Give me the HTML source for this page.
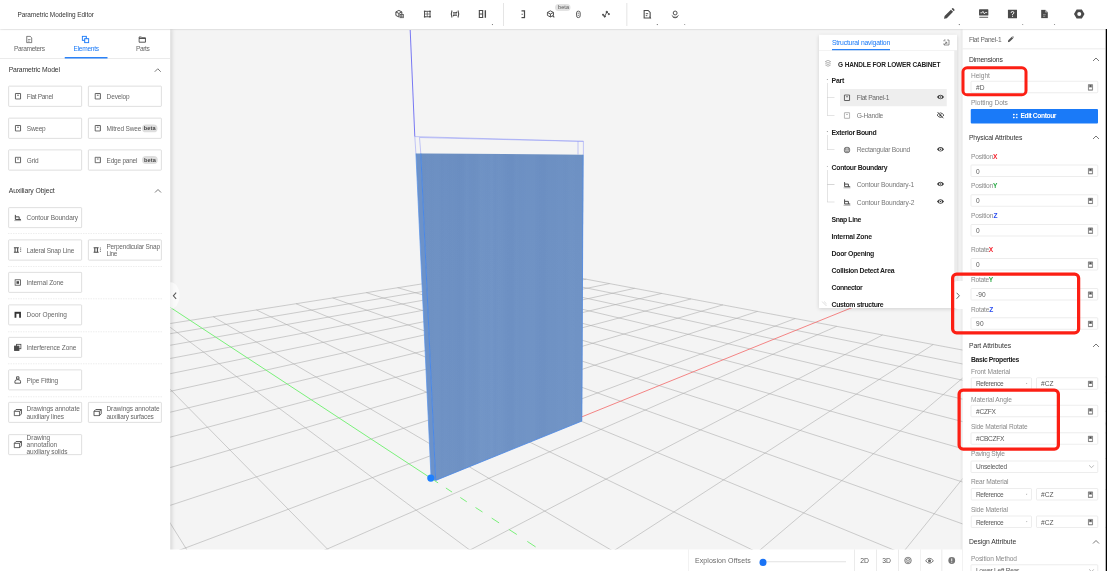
<!DOCTYPE html><html><head><meta charset="utf-8"><style>
*{box-sizing:border-box;margin:0;padding:0}
html,body{width:1107px;height:571px;overflow:hidden;background:#fff}
body{font-family:"Liberation Sans",sans-serif;font-size:6.6px;color:#444;position:relative;letter-spacing:-0.12px}
.abs{position:absolute}
.t{position:absolute;white-space:nowrap;line-height:8px;height:8px}
.b{font-weight:bold;color:#222}
#s4{position:absolute;left:0;top:0;width:4428px;height:2284px;transform:scale(0.25);transform-origin:0 0;filter:saturate(1.0001)}
#z4{position:absolute;left:0;top:0;width:1107px;height:571px;zoom:4}
#canvas{position:absolute;left:0;top:0;width:1107px;height:571px;background:#f4f4f4;overflow:hidden}
#top{z-index:5;position:absolute;left:0;top:0;width:1107px;height:28.9px;background:#fff;box-shadow:0 0.6px 1.6px rgba(0,0,0,0.16)}
#left{position:absolute;left:0;top:29.2px;width:170.2px;height:546px;background:#fff;box-shadow:1.5px 0 4px rgba(0,0,0,0.13)}
#bottom{position:absolute;left:170px;top:549.5px;width:792px;height:22px;background:#fff}
#right{position:absolute;left:962.5px;top:29.2px;width:143px;height:546px;background:#fff;box-shadow:-1px 0 3px rgba(0,0,0,0.13)}
#nav{position:absolute;left:819px;top:34.7px;width:138px;height:273.3px;background:#fff;box-shadow:0 1px 4px rgba(0,0,0,0.15);overflow:hidden}
#edge{position:absolute;left:1105.7px;top:0;width:2px;height:571px;background:#000}
.btn{position:absolute;height:21px;width:73.7px;border:0.75px solid #d4d4d4;border-radius:1px;background:#fff}
.sep{position:absolute;left:8px;width:154px;height:0;border-top:0.7px dashed #dcdcdc}
.inp{position:absolute;height:12px;border:0.7px solid #dadada;border-radius:1px;background:#fff}
.lab{color:#777}
.red{position:absolute;border:3.4px solid #fc1f14;border-radius:5.6px}
</style></head><body>
<div id="s4"><div id="z4">
<div id="canvas"><svg id="scene" width="1107" height="571" viewBox="0 0 1107 571" style="position:absolute;left:0;top:0">
<defs>
<linearGradient id="wood" x1="0" y1="0" x2="1" y2="0"><stop offset="0.000" stop-color="rgb(110,145,195)"/><stop offset="0.022" stop-color="rgb(109,144,194)"/><stop offset="0.043" stop-color="rgb(110,145,196)"/><stop offset="0.065" stop-color="rgb(109,144,194)"/><stop offset="0.087" stop-color="rgb(110,145,195)"/><stop offset="0.109" stop-color="rgb(110,145,195)"/><stop offset="0.130" stop-color="rgb(108,143,194)"/><stop offset="0.152" stop-color="rgb(109,144,195)"/><stop offset="0.174" stop-color="rgb(108,143,194)"/><stop offset="0.196" stop-color="rgb(109,144,194)"/><stop offset="0.217" stop-color="rgb(108,143,194)"/><stop offset="0.239" stop-color="rgb(107,142,193)"/><stop offset="0.261" stop-color="rgb(108,143,194)"/><stop offset="0.283" stop-color="rgb(111,146,196)"/><stop offset="0.304" stop-color="rgb(109,144,195)"/><stop offset="0.326" stop-color="rgb(109,144,194)"/><stop offset="0.348" stop-color="rgb(110,145,195)"/><stop offset="0.370" stop-color="rgb(113,148,197)"/><stop offset="0.391" stop-color="rgb(112,147,197)"/><stop offset="0.413" stop-color="rgb(111,146,196)"/><stop offset="0.435" stop-color="rgb(113,148,198)"/><stop offset="0.457" stop-color="rgb(110,145,196)"/><stop offset="0.478" stop-color="rgb(112,147,197)"/><stop offset="0.500" stop-color="rgb(111,146,196)"/><stop offset="0.522" stop-color="rgb(109,144,195)"/><stop offset="0.543" stop-color="rgb(108,143,194)"/><stop offset="0.565" stop-color="rgb(108,143,194)"/><stop offset="0.587" stop-color="rgb(111,146,196)"/><stop offset="0.609" stop-color="rgb(110,145,195)"/><stop offset="0.630" stop-color="rgb(110,145,196)"/><stop offset="0.652" stop-color="rgb(111,146,196)"/><stop offset="0.674" stop-color="rgb(111,146,196)"/><stop offset="0.696" stop-color="rgb(111,146,196)"/><stop offset="0.717" stop-color="rgb(109,144,195)"/><stop offset="0.739" stop-color="rgb(108,143,194)"/><stop offset="0.761" stop-color="rgb(108,143,194)"/><stop offset="0.783" stop-color="rgb(110,145,195)"/><stop offset="0.804" stop-color="rgb(110,145,195)"/><stop offset="0.826" stop-color="rgb(110,145,195)"/><stop offset="0.848" stop-color="rgb(111,146,196)"/><stop offset="0.870" stop-color="rgb(111,146,196)"/><stop offset="0.891" stop-color="rgb(110,145,195)"/><stop offset="0.913" stop-color="rgb(112,147,196)"/><stop offset="0.935" stop-color="rgb(112,147,197)"/><stop offset="0.957" stop-color="rgb(111,146,196)"/><stop offset="0.978" stop-color="rgb(111,146,196)"/><stop offset="1.000" stop-color="rgb(111,146,196)"/></linearGradient>
<linearGradient id="shade" x1="0" y1="0" x2="0" y2="1"><stop offset="0" stop-color="#6388be" stop-opacity="0.14"/><stop offset="0.5" stop-color="#7da0d0" stop-opacity="0.06"/><stop offset="1" stop-color="#86a8d6" stop-opacity="0.12"/></linearGradient>
</defs>
<g stroke="#ababab" stroke-width="0.58" fill="none">
<line x1="-764.1" y1="470.5" x2="-2952.4" y2="1438.0"/>
<line x1="-603.4" y1="445.2" x2="-2490.7" y2="1438.0"/>
<line x1="-466.7" y1="423.7" x2="-2029.1" y2="1438.0"/>
<line x1="-349.0" y1="405.2" x2="-1567.4" y2="1438.0"/>
<line x1="-246.7" y1="389.1" x2="-1105.8" y2="1438.0"/>
<line x1="-156.9" y1="374.9" x2="-644.1" y2="1438.0"/>
<line x1="-77.5" y1="362.4" x2="-182.5" y2="1438.0"/>
<line x1="-6.7" y1="351.3" x2="279.1" y2="1438.0"/>
<line x1="56.8" y1="341.3" x2="740.8" y2="1438.0"/>
<line x1="114.1" y1="332.3" x2="1202.4" y2="1438.0"/>
<line x1="165.9" y1="324.1" x2="1664.1" y2="1438.0"/>
<line x1="213.2" y1="316.7" x2="2125.7" y2="1438.0"/>
<line x1="256.4" y1="309.9" x2="2587.4" y2="1438.0"/>
<line x1="296.0" y1="303.7" x2="2997.1" y2="1416.6"/>
<line x1="332.6" y1="297.9" x2="2532.2" y2="1087.0"/>
<line x1="366.3" y1="292.6" x2="2260.3" y2="894.2"/>
<line x1="397.6" y1="287.7" x2="2081.9" y2="767.7"/>
<line x1="426.7" y1="283.1" x2="1955.8" y2="678.3"/>
<line x1="453.8" y1="278.9" x2="1861.9" y2="611.7"/>
<line x1="479.1" y1="274.9" x2="1789.4" y2="560.3"/>
<line x1="502.8" y1="271.1" x2="1731.6" y2="519.3"/>
<line x1="525.0" y1="267.7" x2="1684.5" y2="485.9"/>
<line x1="1684.5" y1="485.9" x2="3027.3" y2="1438.0"/>
<line x1="1533.7" y1="457.5" x2="2553.8" y2="1438.0"/>
<line x1="1406.9" y1="433.7" x2="2080.4" y2="1438.0"/>
<line x1="1298.8" y1="413.3" x2="1607.0" y2="1438.0"/>
<line x1="1205.6" y1="395.8" x2="1133.6" y2="1438.0"/>
<line x1="1124.4" y1="380.5" x2="660.2" y2="1438.0"/>
<line x1="1052.9" y1="367.0" x2="186.8" y2="1438.0"/>
<line x1="989.7" y1="355.1" x2="-286.6" y2="1438.0"/>
<line x1="933.2" y1="344.5" x2="-760.1" y2="1438.0"/>
<line x1="882.5" y1="335.0" x2="-1233.5" y2="1438.0"/>
<line x1="836.8" y1="326.3" x2="-1706.9" y2="1438.0"/>
<line x1="795.3" y1="318.5" x2="-2180.3" y2="1438.0"/>
<line x1="757.5" y1="311.4" x2="-2653.7" y2="1438.0"/>
<line x1="722.9" y1="304.9" x2="-2604.4" y2="1284.2"/>
<line x1="691.1" y1="298.9" x2="-1979.0" y2="1007.6"/>
<line x1="661.8" y1="293.4" x2="-1600.1" y2="840.1"/>
<line x1="634.7" y1="288.3" x2="-1346.1" y2="727.7"/>
<line x1="609.6" y1="283.6" x2="-1163.8" y2="647.2"/>
<line x1="586.2" y1="279.2" x2="-1026.8" y2="586.6"/>
<line x1="564.4" y1="275.1" x2="-919.9" y2="539.3"/>
<line x1="544.1" y1="271.2" x2="-834.3" y2="501.5"/>
<line x1="525.0" y1="267.7" x2="-764.1" y2="470.5"/>
</g>
<line x1="67.2" y1="239.8" x2="430.6" y2="478.0" stroke="#7af07a" stroke-width="1"/>
<path d="M432.2 479.1L438.1 482.9M445.9 488.0L452.1 492.1M460.3 497.5L466.8 501.8M475.5 507.5L482.5 512.0M491.7 518.1L499.1 522.9M508.9 529.4L516.8 534.5M527.3 541.4L535.6 546.9M546.8 554.2L555.8 560.1M567.7 567.9L577.3 574.2M590.1 582.6L600.4 589.3M614.2 598.3L625.3 605.6M640.1 615.3L652.1 623.2M668.1 633.7L681.0 642.2M698.4 653.6L712.5 662.8M731.4 675.2L746.8 685.3M767.4 698.8L784.2 709.8M806.9 724.7L825.3 736.8M850.3 753.1L870.6 766.5M898.2 784.6L920.9 799.4M951.6 819.6L976.8 836.1M1011.3 858.7L1039.6 877.3M1078.4 902.7L1110.5 923.7M1154.6 952.6L1191.2 976.6M1241.7 1009.7L1283.8 1037.4M1342.3 1075.7L1391.3 1107.8M1459.8 1152.7L1517.5 1190.6" stroke="#7af07a" stroke-width="1" fill="none"/>
<line x1="430.6" y1="478.0" x2="917.6" y2="281.1" stroke="#f37070" stroke-width="0.85"/>
<!-- z axis -->
<line x1="410.2" y1="30" x2="414.8" y2="136.6" stroke="#5858f2" stroke-width="0.8"/>
<!-- wireframe box on top -->
<g stroke="#8a92f6" stroke-width="0.5" fill="none">
<polyline points="414.8,136.6 583.4,141.3 583.4,154.7"/>
<polyline points="419.5,137.5 578,141.3 578,154.5"/>
<line x1="414.8" y1="136.6" x2="415.9" y2="153.4"/>
<line x1="419.5" y1="137.5" x2="420.8" y2="153.5"/>
<line x1="578" y1="141.3" x2="583.4" y2="141.3"/>
</g>
<!-- panel side -->
<polygon points="415.9,153.4 420.8,153.5 435.7,480.4 431.1,478.7" fill="#6d92c8"/>
<line x1="415.9" y1="153.4" x2="431.1" y2="478.7" stroke="#5590ea" stroke-width="0.7"/>
<!-- panel front -->
<polygon points="420.8,153.5 583.4,154.7 582,421 435.7,480.4" fill="url(#wood)"/>
<polygon points="420.8,153.5 583.4,154.7 582,421 435.7,480.4" fill="url(#shade)"/>
<line x1="420.8" y1="153.5" x2="435.7" y2="480.4" stroke="#4a88e6" stroke-width="1"/>
<line x1="435.7" y1="480.4" x2="582" y2="421" stroke="#4a88e6" stroke-width="0.8"/>
<line x1="583.1" y1="154.7" x2="581.8" y2="421" stroke="#528ce4" stroke-width="0.8"/>
<circle cx="430.8" cy="478.1" r="3.6" fill="#1e80ff"/>
</svg></div>
<div id="top">
<div class="t" style="left:17.4px;top:11px;color:#333;font-size:6.45px;letter-spacing:-0.05px">Parametric Modeling Editor</div>
<svg class="abs" style="left:395.10px;top:9.60px" width="9.00" height="9.00" viewBox="0 0 10 10"><g stroke="#4a4a4a" fill="none" stroke-width="1.1"><path d="M4.3 1 L7.6 2.7 L7.6 5 M4.3 1 L1 2.7 L1 6.6 L4.3 8.3 L4.3 4.4 L1 2.7 M4.3 4.4 L7.6 2.7"/><rect x="5.6" y="5.6" width="3.6" height="3.6" stroke-width="0.9"/><path d="M7.4 5.6V9.2M5.6 7.4H9.2" stroke-width="0.7"/></g></svg>
<svg class="abs" style="left:423.52px;top:10.32px" width="7.56" height="7.56" viewBox="0 0 9 9"><g stroke="#4a4a4a" fill="none" stroke-width="1.1"><rect x="1.2" y="1.2" width="6.6" height="6.6"/><path d="M1.2 4.5H7.8M4.5 1.2V7.8" stroke-width="0.8"/><rect x="0.4" y="0.4" width="1.8" height="1.8" fill="#4a4a4a" stroke="none"/><rect x="6.8" y="0.4" width="1.8" height="1.8" fill="#4a4a4a" stroke="none"/><rect x="0.4" y="6.8" width="1.8" height="1.8" fill="#4a4a4a" stroke="none"/><rect x="6.8" y="6.8" width="1.8" height="1.8" fill="#4a4a4a" stroke="none"/></g></svg>
<svg class="abs" style="left:449.90px;top:9.60px" width="10.00" height="9.00" viewBox="0 0 10 9"><g stroke="#4a4a4a" fill="none" stroke-width="1.1" stroke-width="1"><path d="M2 1 Q0.6 4.5 2 8M8 1 Q9.4 4.5 8 8M3 3.4H7M3 5.6H7M6 2.4L7 3.4M4 6.6L3 5.6"/></g></svg>
<svg class="abs" style="left:477.70px;top:9.60px" width="9.00" height="9.00" viewBox="0 0 9 9"><g stroke="#4a4a4a" fill="none" stroke-width="1.1"><path d="M1 1H5.5M1 4.5H5.5M1 8H5.5M1.6 1V8M4.9 1V8" stroke-width="1.1"/><path d="M7.6 0.8V8.2" stroke-width="1.4"/></g></svg>
<div class="abs" style="left:491.4px;top:24.1px;width:1.7px;height:1.5px;background:#777;clip-path:polygon(0 0,100% 0,100% 100%)"></div>
<div class="abs" style="left:503px;top:3px;width:0.7px;height:23px;background:#dcdcdc"></div>
<svg class="abs" style="left:519.40px;top:9.70px" width="7.00" height="9.00" viewBox="0 0 7 9"><g stroke="#4a4a4a" fill="none" stroke-width="1.1"><path d="M2 1.2H5V7.8H2" stroke-width="1.2"/><path d="M2 4.5H3.4" stroke-width="0.9"/></g></svg>
<svg class="abs" style="left:546.55px;top:10.05px" width="8.70" height="8.70" viewBox="0 0 10 10"><g stroke="#4a4a4a" fill="none" stroke-width="1.1" stroke-width="1"><path d="M4.5 1L8 2.8V6.2L4.5 8L1 6.2V2.8Z M1 2.8L4.5 4.6L8 2.8M4.5 4.6V8"/><path d="M7 6.6L9 8.6" stroke-width="1.2"/></g></svg>
<div class="abs" style="left:555px;top:3.9px;width:15.4px;height:7px;border-radius:3.5px;background:#e3e3e3"></div>
<div class="t" style="left:558.1px;top:3.5px;font-size:5.6px;color:#555;letter-spacing:0">beta</div>
<svg class="abs" style="left:575.43px;top:10.20px" width="5.74" height="8.20" viewBox="0 0 7 10"><g stroke="#4a4a4a" fill="none" stroke-width="1.1" stroke-width="1"><rect x="1.3" y="1" width="4.4" height="8" rx="2.2"/><path d="M2.6 3.6H4.4M2.6 6.2H4.4" stroke-width="0.9"/></g></svg>
<svg class="abs" style="left:602.10px;top:10.20px" width="8.00" height="8.00" viewBox="0 0 10 10"><g stroke="#4a4a4a" fill="none" stroke-width="1.1" stroke-width="1"><path d="M1.2 5.6L3.4 7.8L6 2.2L8.6 4.6"/><circle cx="6" cy="2.2" r="1" fill="#4a4a4a"/><circle cx="3.4" cy="7.8" r="0.9" fill="#4a4a4a"/><circle cx="8.6" cy="4.8" r="0.8" fill="#4a4a4a"/><circle cx="1.3" cy="5.6" r="0.8" fill="#4a4a4a"/></g></svg>
<div class="abs" style="left:626.5px;top:3px;width:0.7px;height:23px;background:#dcdcdc"></div>
<svg class="abs" style="left:642.80px;top:9.20px" width="9.00" height="10.00" viewBox="0 0 9 10"><g stroke="#4a4a4a" fill="none" stroke-width="1.1" stroke-width="1.1"><path d="M1.4 1.2H5.4L7.4 3.2V8.8H1.4Z"/><path d="M3 4.4H5.4M3 6.4H4.6" stroke-width="0.9"/><path d="M6.6 7.6L8.4 9.2" stroke-width="1"/></g></svg>
<div class="abs" style="left:656.2px;top:24.1px;width:1.7px;height:1.5px;background:#777;clip-path:polygon(0 0,100% 0,100% 100%)"></div>
<svg class="abs" style="left:670.70px;top:9.90px" width="8.80" height="8.80" viewBox="0 0 10 10"><g stroke="#4a4a4a" fill="none" stroke-width="1.1" stroke-width="1.1"><circle cx="5" cy="3.4" r="2.2"/><path d="M1.2 6.2Q5 10.6 8.8 6.2"/><path d="M2.4 8.2Q5 9.8 7.6 8.2" stroke-width="0.9"/></g></svg>
<div class="abs" style="left:683.8px;top:24.1px;width:1.7px;height:1.5px;background:#777;clip-path:polygon(0 0,100% 0,100% 100%)"></div>
<svg class="abs" style="left:943.00px;top:7.70px" width="12.00" height="12.00" viewBox="0 0 12 12"><path d="M1 11L1.6 8.2L7.9 1.9L10.1 4.1L3.8 10.4Z M8.6 1.2L9.3 0.5Q9.8 0.1 10.3 0.6L11.4 1.7Q11.8 2.2 11.4 2.7L10.8 3.4Z" fill="#4a4a4a"/></svg>
<div class="abs" style="left:958.2px;top:24.1px;width:1.7px;height:1.5px;background:#777;clip-path:polygon(0 0,100% 0,100% 100%)"></div>
<svg class="abs" style="left:978.80px;top:8.60px" width="10.00" height="10.00" viewBox="0 0 10 10"><rect x="0.3" y="0.8" width="9.4" height="6.3" rx="0.6" fill="#4a4a4a"/><path d="M1.6 4.3H3.3L4.2 2.8L5.6 5.4L6.5 4.1H8.4" stroke="#fff" stroke-width="0.8" fill="none"/><rect x="0.6" y="8.3" width="8.8" height="0.9" fill="#4a4a4a"/></svg>
<svg class="abs" style="left:1007.70px;top:9.50px" width="9.40" height="9.00" viewBox="0 0 9.4 9"><rect x="0" y="0.1" width="9.4" height="8.8" rx="0.6" fill="#4a4a4a"/><path d="M3.4 3.4Q3.4 2 4.7 2Q6.1 2 6.1 3.3Q6.1 4.2 4.8 4.8V5.6" stroke="#fff" stroke-width="1" fill="none"/><rect x="4.3" y="6.3" width="1" height="1" fill="#fff"/></svg>
<div class="abs" style="left:1021.8px;top:24.1px;width:1.7px;height:1.5px;background:#777;clip-path:polygon(0 0,100% 0,100% 100%)"></div>
<svg class="abs" style="left:1041.10px;top:9.60px" width="7.00" height="9.00" viewBox="0 0 7 9"><path d="M0.2 0.3H4.4L6.8 2.7V8.7H0.2Z" fill="#4a4a4a"/><path d="M4.2 0.3V2.9H6.8" fill="#fff" stroke="none" opacity="0.55"/><path d="M2 5.2H4.8M2 6.8H4.2" stroke="#fff" stroke-width="0.6" opacity="0.7"/></svg>
<div class="abs" style="left:1053.6px;top:24.1px;width:1.7px;height:1.5px;background:#777;clip-path:polygon(0 0,100% 0,100% 100%)"></div>
<svg class="abs" style="left:1073.70px;top:9.10px" width="11.00" height="10.00" viewBox="0 0 11 10"><path d="M2.9 0.4H8.1L10.8 5L8.1 9.6H2.9L0.2 5Z" fill="#4a4a4a"/><circle cx="5.5" cy="5" r="2" fill="#fff"/></svg>
</div>
<div id="left">
<svg class="abs" style="left:25.80px;top:6.20px" width="7.00" height="8.00" viewBox="0 0 7 8"><path d="M1 0.8H4.4L6 2.4V7.2H1Z" stroke="#555" fill="none" stroke-width="0.8"/><path d="M2.2 4H4.8M2.2 5.6H4" stroke="#555" stroke-width="0.6"/></svg>
<div class="t " style="left:13.9px;top:15.8px;font-size:6.6px;color:#666;letter-spacing:-0.330px">Parameters</div>
<svg class="abs" style="left:81.60px;top:6.20px" width="8.00" height="8.00" viewBox="0 0 8 8"><rect x="0.8" y="0.8" width="4" height="4" stroke="#1a7af8" fill="none" stroke-width="1"/><rect x="3.2" y="3.2" width="4" height="4" stroke="#1a7af8" fill="#fff" stroke-width="1"/></svg>
<div class="t " style="left:73.5px;top:15.8px;font-size:6.6px;color:#1a7af8;letter-spacing:-0.275px">Elements</div>
<svg class="abs" style="left:138.20px;top:6.70px" width="8.00" height="7.00" viewBox="0 0 8 7"><path d="M0.8 1H3.2L3.9 1.8H7.2V6.2H0.8Z" stroke="#444" fill="none" stroke-width="0.9"/><path d="M0.8 2.4H7.2" stroke="#444" stroke-width="1"/></svg>
<div class="t " style="left:136px;top:15.8px;font-size:6.6px;color:#666;letter-spacing:-0.400px">Parts</div>
<div class="abs" style="left:0;top:29.1px;width:170px;height:0.7px;background:#e4e4e4"></div>
<div class="abs" style="left:64.8px;top:27.7px;width:42.7px;height:1.6px;background:#2b82f7"></div>
<div class="t " style="left:8.7px;top:36.7px;color:#333;font-size:6.8px;;letter-spacing:-0.135px">Parametric Model</div>
<svg class="abs" style="left:153.80px;top:38.50px" width="8.00" height="5.00" viewBox="0 0 8 5"><path d="M1 4L4 1L7 4" stroke="#555" stroke-width="0.8" fill="none"/></svg>
<div class="btn" style="left:8.2px;top:56.5px"></div>
<svg class="abs" style="left:14.40px;top:63.50px" width="7.00" height="7.00" viewBox="0 0 7 7"><rect x="0.9" y="0.7" width="5.2" height="5.6" rx="0.15" stroke="#4a4a4a" fill="none" stroke-width="0.9"/><path d="M2.6 2.5H4.4" stroke="#4a4a4a" stroke-width="0.8"/></svg>
<div class="t " style="left:26.8px;top:63.3px;color:#666;font-size:6.5px;;letter-spacing:-0.327px">Flat Panel</div>
<div class="btn" style="left:88px;top:56.5px"></div>
<svg class="abs" style="left:94.20px;top:63.50px" width="7.00" height="7.00" viewBox="0 0 7 7"><rect x="0.9" y="0.7" width="5.2" height="5.6" rx="0.15" stroke="#4a4a4a" fill="none" stroke-width="0.9"/><path d="M2.6 2.5H4.4" stroke="#4a4a4a" stroke-width="0.8"/></svg>
<div class="t " style="left:106.6px;top:63.3px;color:#666;font-size:6.5px;;letter-spacing:-0.136px">Develop</div>
<div class="btn" style="left:8.2px;top:88.6px"></div>
<svg class="abs" style="left:14.40px;top:95.60px" width="7.00" height="7.00" viewBox="0 0 7 7"><rect x="0.9" y="0.7" width="5.2" height="5.6" rx="0.15" stroke="#4a4a4a" fill="none" stroke-width="0.9"/><path d="M2.6 2.5H4.4" stroke="#4a4a4a" stroke-width="0.8"/></svg>
<div class="t " style="left:26.8px;top:95.4px;color:#666;font-size:6.5px;;letter-spacing:-0.255px">Sweep</div>
<div class="btn" style="left:88px;top:88.6px"></div>
<svg class="abs" style="left:94.20px;top:95.60px" width="7.00" height="7.00" viewBox="0 0 7 7"><rect x="0.9" y="0.7" width="5.2" height="5.6" rx="0.15" stroke="#4a4a4a" fill="none" stroke-width="0.9"/><path d="M2.6 2.5H4.4" stroke="#4a4a4a" stroke-width="0.8"/></svg>
<div class="t " style="left:106.6px;top:95.4px;color:#666;font-size:6.5px;;letter-spacing:-0.130px">Mitred Swee</div>
<div class="abs" style="left:141.9px;top:95.2px;width:15.6px;height:7.8px;border-radius:3.9px;background:#dedede"></div>
<div class="t " style="left:143.8px;top:95.1px;font-size:5.6px;color:#444;font-weight:bold;letter-spacing:0.097px">beta</div>
<div class="btn" style="left:8.2px;top:120.3px"></div>
<svg class="abs" style="left:14.40px;top:127.30px" width="7.00" height="7.00" viewBox="0 0 7 7"><rect x="0.9" y="0.7" width="5.2" height="5.6" rx="0.15" stroke="#4a4a4a" fill="none" stroke-width="0.9"/><path d="M2.6 2.5H4.4" stroke="#4a4a4a" stroke-width="0.8"/></svg>
<div class="t " style="left:26.8px;top:127.1px;color:#666;font-size:6.5px;;letter-spacing:-0.170px">Grid</div>
<div class="btn" style="left:88px;top:120.3px"></div>
<svg class="abs" style="left:94.20px;top:127.30px" width="7.00" height="7.00" viewBox="0 0 7 7"><rect x="0.9" y="0.7" width="5.2" height="5.6" rx="0.15" stroke="#4a4a4a" fill="none" stroke-width="0.9"/><path d="M2.6 2.5H4.4" stroke="#4a4a4a" stroke-width="0.8"/></svg>
<div class="t " style="left:106.6px;top:127.1px;color:#666;font-size:6.5px;;letter-spacing:-0.229px">Edge panel</div>
<div class="abs" style="left:142.1px;top:126.9px;width:15.6px;height:7.8px;border-radius:3.9px;background:#dedede"></div>
<div class="t " style="left:144.0px;top:126.8px;font-size:5.6px;color:#444;font-weight:bold;letter-spacing:0.097px">beta</div>
<div class="t " style="left:8.8px;top:157.8px;color:#333;font-size:6.8px;;letter-spacing:-0.089px">Auxiliary Object</div>
<svg class="abs" style="left:153.90px;top:159.40px" width="8.00" height="5.00" viewBox="0 0 8 5"><path d="M1 4L4 1L7 4" stroke="#555" stroke-width="0.8" fill="none"/></svg>
<div class="btn" style="left:8.2px;top:178.1px;height:20.8px"></div>
<svg class="abs" style="left:13.70px;top:185.00px" width="8.00" height="7.00" viewBox="0 0 8 7"><g stroke="#4a4a4a" fill="none" stroke-width="0.9"><path d="M1.6 0.6V5.2H7.2M1.6 2.6H5.4V5.2" stroke-width="1"/><path d="M0.6 6.5H7.4" stroke-width="0.6"/></g></svg>
<div class="t " style="left:26.6px;top:184.8px;color:#666;font-size:6.5px;;letter-spacing:-0.091px">Contour Boundary</div>
<div class="sep" style="top:204.1px"></div>
<div class="btn" style="left:8.2px;top:210.4px;height:20.8px"></div>
<svg class="abs" style="left:13.20px;top:217.30px" width="9.00" height="7.00" viewBox="0 0 9 7"><g stroke="#4a4a4a" fill="none" stroke-width="0.9"><path d="M0.6 1.2H5.6M0.6 5.8H5.6M1.8 1.2V5.8M4.4 1.2V5.8" stroke-width="1.1"/><path d="M7.4 1V6" stroke-width="0.8" stroke-dasharray="1 0.7"/></g></svg>
<div class="t " style="left:26.6px;top:217.1px;color:#666;font-size:6.5px;;letter-spacing:-0.203px">Lateral Snap Line</div>
<div class="btn" style="left:88px;top:210.4px;height:20.8px"></div>
<svg class="abs" style="left:93.00px;top:217.30px" width="9.00" height="7.00" viewBox="0 0 9 7"><g stroke="#4a4a4a" fill="none" stroke-width="0.9"><path d="M0.6 1.2H5.6M0.6 5.8H5.6M1.8 1.2V5.8M4.4 1.2V5.8" stroke-width="1.1"/><path d="M7.4 1V6" stroke-width="0.8" stroke-dasharray="1 0.7"/></g></svg>
<div class="t " style="left:106.4px;top:213.5px;color:#666;font-size:6.5px;;letter-spacing:-0.205px">Perpendicular Snap</div>
<div class="t " style="left:106.4px;top:220.7px;color:#666;font-size:6.5px;;letter-spacing:-0.447px">Line</div>
<div class="sep" style="top:237.0px"></div>
<div class="btn" style="left:8.2px;top:242.8px;height:20.8px"></div>
<svg class="abs" style="left:14.20px;top:249.70px" width="7.00" height="7.00" viewBox="0 0 7 7"><g stroke="#4a4a4a" fill="none" stroke-width="0.9"><rect x="0.8" y="0.8" width="5.4" height="5.4" stroke-width="0.8"/><rect x="2.2" y="2.2" width="2.6" height="2.6" fill="#4a4a4a" stroke="none"/></g></svg>
<div class="t " style="left:26.6px;top:249.5px;color:#666;font-size:6.5px;;letter-spacing:-0.100px">Internal Zone</div>
<div class="sep" style="top:269.3px"></div>
<div class="btn" style="left:8.2px;top:275.2px;height:20.8px"></div>
<svg class="abs" style="left:13.70px;top:282.10px" width="8.00" height="7.00" viewBox="0 0 8 7"><path d="M0.8 0.6H7.2V6.6H5.4V2.6H2.6V6.6H0.8Z" fill="#333"/></svg>
<div class="t " style="left:26.6px;top:281.9px;color:#666;font-size:6.5px;;letter-spacing:-0.014px">Door Opening</div>
<div class="sep" style="top:302.2px"></div>
<div class="btn" style="left:8.2px;top:307.8px;height:20.8px"></div>
<svg class="abs" style="left:13.70px;top:314.20px" width="8.00" height="8.00" viewBox="0 0 8 8"><g stroke="#4a4a4a" fill="none" stroke-width="0.9"><rect x="0.8" y="2.6" width="4.4" height="4.4" fill="#4a4a4a"/><rect x="2.8" y="0.8" width="4.4" height="4.4"/></g></svg>
<div class="t " style="left:26.6px;top:314.5px;color:#666;font-size:6.5px;;letter-spacing:-0.095px">Interference Zone</div>
<div class="sep" style="top:334.4px"></div>
<div class="btn" style="left:8.2px;top:340.3px;height:20.8px"></div>
<svg class="abs" style="left:13.70px;top:346.70px" width="8.00" height="8.00" viewBox="0 0 8 8"><g stroke="#4a4a4a" fill="none" stroke-width="0.9"><path d="M2.8 0.8H5.2V3H2.8ZM1.2 7.2V5.2Q1.2 3.6 4 3.6Q6.8 3.6 6.8 5.2V7.2Z" stroke-width="0.9"/></g></svg>
<div class="t " style="left:26.6px;top:347.0px;color:#666;font-size:6.5px;;letter-spacing:-0.085px">Pipe Fitting</div>
<div class="sep" style="top:367.2px"></div>
<div class="btn" style="left:8.2px;top:372.8px;height:20.8px"></div>
<svg class="abs" style="left:13.20px;top:379.20px" width="9.00" height="8.00" viewBox="0 0 9 8"><g stroke="#4a4a4a" fill="none" stroke-width="0.9"><path d="M1 2.8H6.4V7.2H1ZM1 2.8L2.8 1H8.2L6.4 2.8M8.2 1V5.4L6.4 7.2" stroke-width="0.9"/></g></svg>
<div class="t " style="left:26.6px;top:375.9px;color:#666;font-size:6.5px;;letter-spacing:-0.065px">Drawings annotate</div>
<div class="t " style="left:26.6px;top:383.1px;color:#666;font-size:6.5px;;letter-spacing:-0.115px">auxiliary lines</div>
<div class="btn" style="left:88px;top:372.8px;height:20.8px"></div>
<svg class="abs" style="left:93.00px;top:379.20px" width="9.00" height="8.00" viewBox="0 0 9 8"><g stroke="#4a4a4a" fill="none" stroke-width="0.9"><path d="M1 2.8H6.4V7.2H1ZM1 2.8L2.8 1H8.2L6.4 2.8M8.2 1V5.4L6.4 7.2" stroke-width="0.9"/></g></svg>
<div class="t " style="left:106.4px;top:375.9px;color:#666;font-size:6.5px;;letter-spacing:-0.065px">Drawings annotate</div>
<div class="t " style="left:106.4px;top:383.1px;color:#666;font-size:6.5px;;letter-spacing:-0.162px">auxiliary surfaces</div>
<div class="btn" style="left:8.2px;top:405.0px;height:20.8px"></div>
<svg class="abs" style="left:13.20px;top:411.40px" width="9.00" height="8.00" viewBox="0 0 9 8"><g stroke="#4a4a4a" fill="none" stroke-width="0.9"><path d="M1 2.8H6.4V7.2H1ZM1 2.8L2.8 1H8.2L6.4 2.8M8.2 1V5.4L6.4 7.2" stroke-width="0.9"/></g></svg>
<div class="t " style="left:26.6px;top:404.5px;color:#666;font-size:6.5px;;letter-spacing:-0.035px">Drawing</div>
<div class="t " style="left:26.6px;top:411.7px;color:#666;font-size:6.5px;;letter-spacing:0.024px">annotation</div>
<div class="t " style="left:26.6px;top:418.9px;color:#666;font-size:6.5px;;letter-spacing:-0.092px">auxiliary solids</div>
</div>
<div class="abs" style="left:170.3px;top:282.3px;width:9.3px;height:26.4px;background:rgba(255,255,255,0.6);border-radius:0 9px 9px 0 / 0 12px 12px 0"></div>
<svg class="abs" style="left:172.2px;top:291.9px" width="5" height="7.6" viewBox="0 0 5 7.6"><path d="M3.9 0.7L1.1 3.8L3.9 6.9" stroke="#5a5a5a" stroke-width="1.05" fill="none"/></svg>
<div id="nav">
<div class="t " style="left:13px;top:4.1px;color:#1a7af8;font-size:6.8px;letter-spacing:-0.189px">Structural navigation</div>
<div class="abs" style="left:0;top:15.2px;width:138px;height:0.7px;background:#e6e6e6"></div>
<div class="abs" style="left:13px;top:14.2px;width:58px;height:1.4px;background:#2b82f7"></div>
<svg class="abs" style="left:123.90px;top:4.40px" width="7.00" height="7.00" viewBox="0 0 7 7"><path d="M1 2.4V1H2.6M4.2 1H6V6H1V4.2" stroke="#666" stroke-width="0.7" fill="none"/><path d="M1.2 5.8L3.8 3.2M3.8 5V3.2H2" stroke="#666" stroke-width="0.7" fill="none"/></svg>
<div class="abs" style="left:135.3px;top:15.7px;width:3px;height:260px;background:#ebebeb"></div>
<svg class="abs" style="left:5.60px;top:24.70px" width="7.00" height="8.00" viewBox="0 0 7 8"><g stroke="#999" fill="none" stroke-width="0.7"><path d="M3.5 0.8L6.2 2.1L3.5 3.4L0.8 2.1Z"/><path d="M0.8 3.8L3.5 5.1L6.2 3.8M0.8 5.5L3.5 6.8L6.2 5.5"/></g></svg>
<div class="t " style="left:19.1px;top:26.0px;font-size:6.5px;color:#222;font-weight:bold;letter-spacing:-0.152px">G HANDLE FOR LOWER CABINET</div>
<div class="abs" style="left:7.4px;top:44.3px;width:1.8px;height:1.3px;background:#999;clip-path:polygon(0 0,100% 0,50% 100%)"></div>
<div class="t " style="left:12.6px;top:42.0px;font-size:6.9px;color:#222;font-weight:bold;letter-spacing:-0.280px">Part</div>
<div class="abs" style="left:8.0px;top:48.3px;width:0.6px;height:32.5px;background:#c8c8c8"></div>
<div class="abs" style="left:8.0px;top:62.5px;width:7.5px;height:0.6px;background:#c8c8c8"></div>
<div class="abs" style="left:8.0px;top:80.5px;width:7.5px;height:0.6px;background:#c8c8c8"></div>
<div class="abs" style="left:21px;top:54.3px;width:106.8px;height:17.2px;background:#eeeeee"></div>
<svg class="abs" style="left:24.40px;top:59.60px" width="7.00" height="7.00" viewBox="0 0 7 7"><rect x="0.9" y="0.7" width="5.2" height="5.6" rx="0.15" stroke="#4a4a4a" fill="none" stroke-width="0.9"/><path d="M2.6 2.5H4.4" stroke="#4a4a4a" stroke-width="0.8"/></svg>
<div class="t " style="left:37.7px;top:59.3px;font-size:6.7px;color:#777;color:#666;letter-spacing:-0.310px">Flat Panel-1</div>
<svg class="abs" style="left:117.50px;top:59.30px" width="8.00" height="6.00" viewBox="0 0 8 6"><path d="M0.4 3Q4 -1.6 7.6 3Q4 7.6 0.4 3Z" fill="#3a3a3a"/><circle cx="4" cy="3" r="1.5" fill="#fff"/><circle cx="4" cy="3" r="0.8" fill="#3a3a3a"/></svg>
<svg class="abs" style="left:24.40px;top:77.30px" width="7.00" height="7.00" viewBox="0 0 7 7"><rect x="0.9" y="0.7" width="5.2" height="5.6" rx="0.15" stroke="#aaa" fill="none" stroke-width="0.9"/><path d="M2.6 2.5H4.4" stroke="#aaa" stroke-width="0.8"/></svg>
<div class="t " style="left:37.7px;top:77.0px;font-size:6.7px;color:#777;letter-spacing:-0.296px">G-Handle</div>
<svg class="abs" style="left:117.50px;top:77.00px" width="8.00" height="7.00" viewBox="0 0 8 7"><path d="M0.6 3.4Q4 -1 7.4 3.4Q4 7.8 0.6 3.4Z" fill="none" stroke="#3a3a3a" stroke-width="0.9"/><circle cx="4" cy="3.4" r="1.1" fill="#3a3a3a"/><path d="M1 0.2L7 6.6" stroke="#3a3a3a" stroke-width="0.9"/><path d="M1.7 -0.3L7.7 6.1" stroke="#fff" stroke-width="0.6"/></svg>
<div class="abs" style="left:7.4px;top:96.4px;width:1.8px;height:1.3px;background:#999;clip-path:polygon(0 0,100% 0,50% 100%)"></div>
<div class="t " style="left:12.6px;top:94.1px;font-size:6.9px;color:#222;font-weight:bold;letter-spacing:-0.366px">Exterior Bound</div>
<div class="abs" style="left:8.0px;top:100.3px;width:0.6px;height:14.8px;background:#c8c8c8"></div>
<div class="abs" style="left:8.0px;top:114.8px;width:7.5px;height:0.6px;background:#c8c8c8"></div>
<svg class="abs" style="left:24.40px;top:111.80px" width="7.00" height="7.00" viewBox="0 0 7 7"><g stroke="#555" fill="none" stroke-width="0.8"><circle cx="3.5" cy="3.5" r="2.9"/><path d="M3.5 1.4L5.4 2.4V4.6L3.5 5.6L1.6 4.6V2.4ZM1.6 2.4L3.5 3.5L5.4 2.4M3.5 3.5V5.6" stroke-width="0.6"/></g></svg>
<div class="t " style="left:37.7px;top:111.3px;font-size:6.7px;color:#777;letter-spacing:-0.239px">Rectangular Bound</div>
<svg class="abs" style="left:117.50px;top:111.60px" width="8.00" height="6.00" viewBox="0 0 8 6"><path d="M0.4 3Q4 -1.6 7.6 3Q4 7.6 0.4 3Z" fill="#3a3a3a"/><circle cx="4" cy="3" r="1.5" fill="#fff"/><circle cx="4" cy="3" r="0.8" fill="#3a3a3a"/></svg>
<div class="abs" style="left:7.4px;top:131.1px;width:1.8px;height:1.3px;background:#999;clip-path:polygon(0 0,100% 0,50% 100%)"></div>
<div class="t " style="left:12.6px;top:128.8px;font-size:6.9px;color:#222;font-weight:bold;letter-spacing:-0.333px">Contour Boundary</div>
<div class="abs" style="left:8.0px;top:135.3px;width:0.6px;height:32.0px;background:#c8c8c8"></div>
<div class="abs" style="left:8.0px;top:149.6px;width:7.5px;height:0.6px;background:#c8c8c8"></div>
<div class="abs" style="left:8.0px;top:167.0px;width:7.5px;height:0.6px;background:#c8c8c8"></div>
<svg class="abs" style="left:23.90px;top:146.80px" width="8.00" height="7.00" viewBox="0 0 8 7"><g stroke="#4a4a4a" fill="none" stroke-width="0.9"><path d="M1.6 0.6V5.2H7.2M1.6 2.6H5.4V5.2" stroke-width="1"/><path d="M0.6 6.5H7.4" stroke-width="0.6"/></g></svg>
<div class="t " style="left:37.7px;top:146.3px;font-size:6.7px;color:#777;letter-spacing:-0.168px">Contour Boundary-1</div>
<svg class="abs" style="left:117.50px;top:146.30px" width="8.00" height="6.00" viewBox="0 0 8 6"><path d="M0.4 3Q4 -1.6 7.6 3Q4 7.6 0.4 3Z" fill="#3a3a3a"/><circle cx="4" cy="3" r="1.5" fill="#fff"/><circle cx="4" cy="3" r="0.8" fill="#3a3a3a"/></svg>
<svg class="abs" style="left:23.90px;top:164.10px" width="8.00" height="7.00" viewBox="0 0 8 7"><g stroke="#4a4a4a" fill="none" stroke-width="0.9"><path d="M1.6 0.6V5.2H7.2M1.6 2.6H5.4V5.2" stroke-width="1"/><path d="M0.6 6.5H7.4" stroke-width="0.6"/></g></svg>
<div class="t " style="left:37.7px;top:163.5px;font-size:6.7px;color:#777;letter-spacing:-0.152px">Contour Boundary-2</div>
<svg class="abs" style="left:117.50px;top:163.70px" width="8.00" height="6.00" viewBox="0 0 8 6"><path d="M0.4 3Q4 -1.6 7.6 3Q4 7.6 0.4 3Z" fill="#3a3a3a"/><circle cx="4" cy="3" r="1.5" fill="#fff"/><circle cx="4" cy="3" r="0.8" fill="#3a3a3a"/></svg>
<div class="t " style="left:12.6px;top:181.1px;font-size:6.9px;color:#222;font-weight:bold;letter-spacing:-0.407px">Snap Line</div>
<div class="t " style="left:12.6px;top:198.1px;font-size:6.9px;color:#222;font-weight:bold;letter-spacing:-0.232px">Internal Zone</div>
<div class="t " style="left:12.6px;top:215.0px;font-size:6.9px;color:#222;font-weight:bold;letter-spacing:-0.299px">Door Opening</div>
<div class="t " style="left:12.6px;top:231.6px;font-size:6.9px;color:#222;font-weight:bold;letter-spacing:-0.311px">Collision Detect Area</div>
<div class="t " style="left:12.6px;top:248.9px;font-size:6.9px;color:#222;font-weight:bold;letter-spacing:-0.421px">Connector</div>
<div class="t " style="left:12.6px;top:266.1px;font-size:6.9px;color:#222;font-weight:bold;letter-spacing:-0.362px">Custom structure</div>
<svg class="abs" style="left:2.5px;top:265.8px" width="6" height="6" viewBox="0 0 6 6"><path d="M0.5 1L5 5.5M2.6 1L5 3.4" stroke="#bbb" stroke-width="0.5"/></svg>
</div>
<div id="right">
<div class="t " style="left:6.4px;top:6.1px;font-size:6.6px;color:#8a8a8a;color:#666;letter-spacing:-0.265px">Flat Panel-1</div>
<svg class="abs" style="left:44.80px;top:6.60px" width="7.00" height="7.00" viewBox="0 0 7 7"><path d="M0.6 6.4L1 4.6L4.6 1L6 2.4L2.4 6Z M5 0.6L5.5 0.2L6.8 1.5L6.4 2Z" fill="#555"/></svg>
<div class="abs" style="left:0;top:19.4px;width:143px;height:0.7px;background:#e6e6e6"></div>
<div class="t " style="left:6.4px;top:26.2px;font-size:6.8px;color:#333;letter-spacing:-0.181px">Dimensions</div>
<svg class="abs" style="left:129.50px;top:27.70px" width="8.00" height="5.00" viewBox="0 0 8 5"><path d="M1 4L4 1L7 4" stroke="#555" stroke-width="0.8" fill="none"/></svg>
<div class="t " style="left:8.5px;top:42.2px;font-size:6.6px;color:#8a8a8a;letter-spacing:-0.046px">Height</div>
<div class="inp" style="left:8.2px;top:51.80px;width:127.3px;height:12.0px"></div>
<div class="t " style="left:13.6px;top:54.3px;font-size:6.6px;color:#5a5a5a;letter-spacing:-0.119px">#D</div>
<svg class="abs" style="left:125.30px;top:54.80px" width="5.40" height="6.80" viewBox="0 0 5.4 6.8"><rect x="0.4" y="0.4" width="4.6" height="6" rx="0.5" fill="#909090" stroke="#6c6c6c" stroke-width="0.55"/><rect x="1.2" y="3.5" width="3" height="1.9" fill="#fff"/><rect x="2" y="1.3" width="1.5" height="1.4" rx="0.4" fill="#4a4a4a"/></svg>
<div class="t " style="left:8.5px;top:69.7px;font-size:6.6px;color:#8a8a8a;letter-spacing:-0.047px">Plotting Dots</div>
<div class="abs" style="left:8.2px;top:79.7px;width:127.3px;height:14.5px;background:#1a7af8;border-radius:1px"></div>
<svg class="abs" style="left:50.25px;top:84.35px" width="5.10" height="5.10" viewBox="0 0 6 6"><path d="M1.2 1.2H4.8V4.8H1.2Z" stroke="#fff" stroke-width="0.8" fill="none" stroke-dasharray="2.2 1.4" stroke-dashoffset="1.1"/><rect x="0.3" y="0.3" width="1.6" height="1.6" fill="#fff"/><rect x="4.1" y="0.3" width="1.6" height="1.6" fill="#fff"/><rect x="0.3" y="4.1" width="1.6" height="1.6" fill="#fff"/><rect x="4.1" y="4.1" width="1.6" height="1.6" fill="#fff"/></svg>
<div class="t " style="left:57.9px;top:82.9px;font-size:6.7px;color:#fff;font-weight:bold;letter-spacing:-0.413px">Edit Contour</div>
<div class="t " style="left:6.4px;top:104.2px;font-size:6.8px;color:#333;letter-spacing:-0.118px">Physical Attributes</div>
<svg class="abs" style="left:129.50px;top:105.90px" width="8.00" height="5.00" viewBox="0 0 8 5"><path d="M1 4L4 1L7 4" stroke="#555" stroke-width="0.8" fill="none"/></svg>
<div class="t " style="left:8.5px;top:123.1px;font-size:6.6px;color:#8a8a8a;letter-spacing:-0.175px">Position<span style="color:#f5222d;font-weight:bold">X</span></div>
<div class="inp" style="left:8.2px;top:135.60px;width:127.3px;height:12.0px"></div>
<div class="t " style="left:13.6px;top:138.1px;font-size:6.6px;color:#5a5a5a;letter-spacing:-0.472px">0</div>
<svg class="abs" style="left:125.30px;top:138.60px" width="5.40" height="6.80" viewBox="0 0 5.4 6.8"><rect x="0.4" y="0.4" width="4.6" height="6" rx="0.5" fill="#909090" stroke="#6c6c6c" stroke-width="0.55"/><rect x="1.2" y="3.5" width="3" height="1.9" fill="#fff"/><rect x="2" y="1.3" width="1.5" height="1.4" rx="0.4" fill="#4a4a4a"/></svg>
<div class="t " style="left:8.5px;top:152.7px;font-size:6.6px;color:#8a8a8a;letter-spacing:-0.175px">Position<span style="color:#27a844;font-weight:bold">Y</span></div>
<div class="inp" style="left:8.2px;top:165.20px;width:127.3px;height:12.0px"></div>
<div class="t " style="left:13.6px;top:167.7px;font-size:6.6px;color:#5a5a5a;letter-spacing:-0.472px">0</div>
<svg class="abs" style="left:125.30px;top:168.20px" width="5.40" height="6.80" viewBox="0 0 5.4 6.8"><rect x="0.4" y="0.4" width="4.6" height="6" rx="0.5" fill="#909090" stroke="#6c6c6c" stroke-width="0.55"/><rect x="1.2" y="3.5" width="3" height="1.9" fill="#fff"/><rect x="2" y="1.3" width="1.5" height="1.4" rx="0.4" fill="#4a4a4a"/></svg>
<div class="t " style="left:8.5px;top:182.7px;font-size:6.6px;color:#8a8a8a;letter-spacing:-0.134px">Position<span style="color:#2a4df0;font-weight:bold">Z</span></div>
<div class="inp" style="left:8.2px;top:195.10px;width:127.3px;height:12.0px"></div>
<div class="t " style="left:13.6px;top:197.6px;font-size:6.6px;color:#5a5a5a;letter-spacing:-0.472px">0</div>
<svg class="abs" style="left:125.30px;top:198.10px" width="5.40" height="6.80" viewBox="0 0 5.4 6.8"><rect x="0.4" y="0.4" width="4.6" height="6" rx="0.5" fill="#909090" stroke="#6c6c6c" stroke-width="0.55"/><rect x="1.2" y="3.5" width="3" height="1.9" fill="#fff"/><rect x="2" y="1.3" width="1.5" height="1.4" rx="0.4" fill="#4a4a4a"/></svg>
<div class="t " style="left:8.5px;top:216.3px;font-size:6.6px;color:#8a8a8a;letter-spacing:-0.263px">Rotate<span style="color:#f5222d;font-weight:bold">X</span></div>
<div class="inp" style="left:8.2px;top:229.00px;width:127.3px;height:12.0px"></div>
<div class="t " style="left:13.6px;top:231.5px;font-size:6.6px;color:#5a5a5a;letter-spacing:-0.472px">0</div>
<svg class="abs" style="left:125.30px;top:232.00px" width="5.40" height="6.80" viewBox="0 0 5.4 6.8"><rect x="0.4" y="0.4" width="4.6" height="6" rx="0.5" fill="#909090" stroke="#6c6c6c" stroke-width="0.55"/><rect x="1.2" y="3.5" width="3" height="1.9" fill="#fff"/><rect x="2" y="1.3" width="1.5" height="1.4" rx="0.4" fill="#4a4a4a"/></svg>
<div class="t " style="left:8.5px;top:246.6px;font-size:6.6px;color:#8a8a8a;letter-spacing:-0.263px">Rotate<span style="color:#27a844;font-weight:bold">Y</span></div>
<div class="inp" style="left:8.2px;top:259.10px;width:127.3px;height:12.0px"></div>
<div class="t " style="left:13.6px;top:261.6px;font-size:6.6px;color:#5a5a5a;letter-spacing:-0.013px">-90</div>
<svg class="abs" style="left:125.30px;top:262.10px" width="5.40" height="6.80" viewBox="0 0 5.4 6.8"><rect x="0.4" y="0.4" width="4.6" height="6" rx="0.5" fill="#909090" stroke="#6c6c6c" stroke-width="0.55"/><rect x="1.2" y="3.5" width="3" height="1.9" fill="#fff"/><rect x="2" y="1.3" width="1.5" height="1.4" rx="0.4" fill="#4a4a4a"/></svg>
<div class="t " style="left:8.5px;top:276.4px;font-size:6.6px;color:#8a8a8a;letter-spacing:-0.210px">Rotate<span style="color:#2a4df0;font-weight:bold">Z</span></div>
<div class="inp" style="left:8.2px;top:288.40px;width:127.3px;height:12.0px"></div>
<div class="t " style="left:13.6px;top:290.9px;font-size:6.6px;color:#5a5a5a;letter-spacing:0.130px">90</div>
<svg class="abs" style="left:125.30px;top:291.40px" width="5.40" height="6.80" viewBox="0 0 5.4 6.8"><rect x="0.4" y="0.4" width="4.6" height="6" rx="0.5" fill="#909090" stroke="#6c6c6c" stroke-width="0.55"/><rect x="1.2" y="3.5" width="3" height="1.9" fill="#fff"/><rect x="2" y="1.3" width="1.5" height="1.4" rx="0.4" fill="#4a4a4a"/></svg>
<div class="t " style="left:6.4px;top:312.2px;font-size:6.8px;color:#333;letter-spacing:-0.039px">Part Attributes</div>
<svg class="abs" style="left:129.50px;top:313.80px" width="8.00" height="5.00" viewBox="0 0 8 5"><path d="M1 4L4 1L7 4" stroke="#555" stroke-width="0.8" fill="none"/></svg>
<div class="t " style="left:8.5px;top:326.5px;font-size:6.8px;color:#222;font-weight:bold;letter-spacing:-0.359px">Basic Properties</div>
<div class="t " style="left:8.5px;top:338.3px;font-size:6.6px;color:#8a8a8a;letter-spacing:-0.114px">Front Material</div>
<div class="inp" style="left:8.4px;top:348.20px;width:60.9px;height:12.0px"></div>
<div class="t " style="left:13.4px;top:350.6px;font-size:6.6px;color:#5a5a5a;letter-spacing:-0.327px">Reference</div>
<div class="abs" style="left:63.2px;top:353.6px;width:2px;height:1.3px;background:#999;clip-path:polygon(0 0,100% 0,50% 100%)"></div>
<div class="inp" style="left:73.7px;top:348.20px;width:61.8px;height:12.0px"></div>
<div class="t " style="left:78.6px;top:350.6px;font-size:6.6px;color:#5a5a5a;letter-spacing:-0.055px">#CZ</div>
<svg class="abs" style="left:125.30px;top:351.20px" width="5.40" height="6.80" viewBox="0 0 5.4 6.8"><rect x="0.4" y="0.4" width="4.6" height="6" rx="0.5" fill="#909090" stroke="#6c6c6c" stroke-width="0.55"/><rect x="1.2" y="3.5" width="3" height="1.9" fill="#fff"/><rect x="2" y="1.3" width="1.5" height="1.4" rx="0.4" fill="#4a4a4a"/></svg>
<div class="t " style="left:8.5px;top:366.2px;font-size:6.6px;color:#8a8a8a;letter-spacing:-0.072px">Material Angle</div>
<div class="inp" style="left:8.2px;top:375.80px;width:127.3px;height:12.0px"></div>
<div class="t " style="left:13.6px;top:378.3px;font-size:6.6px;color:#5a5a5a;letter-spacing:-0.260px">#CZFX</div>
<svg class="abs" style="left:125.30px;top:378.80px" width="5.40" height="6.80" viewBox="0 0 5.4 6.8"><rect x="0.4" y="0.4" width="4.6" height="6" rx="0.5" fill="#909090" stroke="#6c6c6c" stroke-width="0.55"/><rect x="1.2" y="3.5" width="3" height="1.9" fill="#fff"/><rect x="2" y="1.3" width="1.5" height="1.4" rx="0.4" fill="#4a4a4a"/></svg>
<div class="t " style="left:8.5px;top:393.5px;font-size:6.6px;color:#8a8a8a;letter-spacing:-0.169px">Side Material Rotate</div>
<div class="inp" style="left:8.2px;top:403.30px;width:127.3px;height:12.0px"></div>
<div class="t " style="left:13.6px;top:405.8px;font-size:6.6px;color:#5a5a5a;letter-spacing:-0.280px">#CBCZFX</div>
<svg class="abs" style="left:125.30px;top:406.30px" width="5.40" height="6.80" viewBox="0 0 5.4 6.8"><rect x="0.4" y="0.4" width="4.6" height="6" rx="0.5" fill="#909090" stroke="#6c6c6c" stroke-width="0.55"/><rect x="1.2" y="3.5" width="3" height="1.9" fill="#fff"/><rect x="2" y="1.3" width="1.5" height="1.4" rx="0.4" fill="#4a4a4a"/></svg>
<div class="t " style="left:8.5px;top:420.9px;font-size:6.6px;color:#8a8a8a;letter-spacing:-0.248px">Paving Style</div>
<div class="inp" style="left:8.2px;top:431.50px;width:127.3px;height:12.0px"></div>
<div class="t " style="left:13.4px;top:433.9px;font-size:6.6px;color:#5a5a5a;letter-spacing:-0.201px">Unselected</div>
<svg class="abs" style="left:126.10px;top:435.40px" width="6.00" height="4.00" viewBox="0 0 6 4"><path d="M0.6 0.8L3 3.2L5.4 0.8" stroke="#888" stroke-width="0.6" fill="none"/></svg>
<div class="t " style="left:8.5px;top:448.9px;font-size:6.6px;color:#8a8a8a;letter-spacing:-0.185px">Rear Material</div>
<div class="inp" style="left:8.4px;top:459.00px;width:60.9px;height:12.0px"></div>
<div class="t " style="left:13.4px;top:461.4px;font-size:6.6px;color:#5a5a5a;letter-spacing:-0.327px">Reference</div>
<div class="abs" style="left:63.2px;top:464.4px;width:2px;height:1.3px;background:#999;clip-path:polygon(0 0,100% 0,50% 100%)"></div>
<div class="inp" style="left:73.7px;top:459.00px;width:61.8px;height:12.0px"></div>
<div class="t " style="left:78.6px;top:461.4px;font-size:6.6px;color:#5a5a5a;letter-spacing:-0.055px">#CZ</div>
<svg class="abs" style="left:125.30px;top:462.00px" width="5.40" height="6.80" viewBox="0 0 5.4 6.8"><rect x="0.4" y="0.4" width="4.6" height="6" rx="0.5" fill="#909090" stroke="#6c6c6c" stroke-width="0.55"/><rect x="1.2" y="3.5" width="3" height="1.9" fill="#fff"/><rect x="2" y="1.3" width="1.5" height="1.4" rx="0.4" fill="#4a4a4a"/></svg>
<div class="t " style="left:8.5px;top:476.8px;font-size:6.6px;color:#8a8a8a;letter-spacing:-0.131px">Side Material</div>
<div class="inp" style="left:8.4px;top:486.60px;width:60.9px;height:12.0px"></div>
<div class="t " style="left:13.4px;top:489.0px;font-size:6.6px;color:#5a5a5a;letter-spacing:-0.327px">Reference</div>
<div class="abs" style="left:63.2px;top:492.0px;width:2px;height:1.3px;background:#999;clip-path:polygon(0 0,100% 0,50% 100%)"></div>
<div class="inp" style="left:73.7px;top:486.60px;width:61.8px;height:12.0px"></div>
<div class="t " style="left:78.6px;top:489.0px;font-size:6.6px;color:#5a5a5a;letter-spacing:-0.055px">#CZ</div>
<svg class="abs" style="left:125.30px;top:489.60px" width="5.40" height="6.80" viewBox="0 0 5.4 6.8"><rect x="0.4" y="0.4" width="4.6" height="6" rx="0.5" fill="#909090" stroke="#6c6c6c" stroke-width="0.55"/><rect x="1.2" y="3.5" width="3" height="1.9" fill="#fff"/><rect x="2" y="1.3" width="1.5" height="1.4" rx="0.4" fill="#4a4a4a"/></svg>
<div class="t " style="left:6.4px;top:508.8px;font-size:6.8px;color:#333;letter-spacing:-0.043px">Design Attribute</div>
<svg class="abs" style="left:129.50px;top:510.30px" width="8.00" height="5.00" viewBox="0 0 8 5"><path d="M1 4L4 1L7 4" stroke="#555" stroke-width="0.8" fill="none"/></svg>
<div class="t " style="left:8.5px;top:525.0px;font-size:6.6px;color:#8a8a8a;letter-spacing:-0.094px">Position Method</div>
<div class="inp" style="left:8.2px;top:535.30px;width:127.3px;height:12.0px"></div>
<div class="t " style="left:13.4px;top:537.7px;font-size:6.6px;color:#5a5a5a;letter-spacing:-0.263px">Lower Left Rear</div>
<svg class="abs" style="left:126.10px;top:539.20px" width="6.00" height="4.00" viewBox="0 0 6 4"><path d="M0.6 0.8L3 3.2L5.4 0.8" stroke="#888" stroke-width="0.6" fill="none"/></svg>
</div>
<div class="abs" style="left:952.5px;top:281px;width:10.5px;height:28px;background:#fff;border-radius:5px 0 0 5px"></div>
<svg class="abs" style="left:955.6px;top:292.3px" width="5" height="7" viewBox="0 0 5 7"><path d="M1.1 0.5L3.9 3.5L1.1 6.5" stroke="#666" stroke-width="1" fill="none"/></svg>
<div class="red" style="left:961.4px;top:66.3px;width:66px;height:29.9px;border-width:3px"></div>
<div class="red" style="left:951.1px;top:272.6px;width:129.2px;height:62px"></div>
<div class="red" style="left:957.5px;top:388.4px;width:102.4px;height:62.4px"></div>
<div id="bottom">
<div class="abs" style="left:518.4px;top:0;width:0.7px;height:22px;background:#e4e4e4"></div>
<div class="abs" style="left:684.3px;top:0;width:0.7px;height:22px;background:#e4e4e4"></div>
<div class="abs" style="left:706.0px;top:0;width:0.7px;height:22px;background:#e4e4e4"></div>
<div class="abs" style="left:728.2px;top:0;width:0.7px;height:22px;background:#e4e4e4"></div>
<div class="abs" style="left:749.9px;top:0;width:0.7px;height:22px;background:#e4e4e4"></div>
<div class="abs" style="left:771.5px;top:0;width:0.7px;height:22px;background:#e4e4e4"></div>
<div class="t " style="left:524.9px;top:7.1px;font-size:7px;color:#6a6a6a;letter-spacing:0.092px">Explosion Offsets</div>
<div class="abs" style="left:593px;top:11.8px;width:83px;height:0.9px;background:#e2e2e2"></div>
<div class="abs" style="left:589.4px;top:9.3px;width:7.2px;height:7.2px;border-radius:50%;background:#1a73f5"></div>
<div class="t " style="left:690.2px;top:7.1px;font-size:6.8px;letter-spacing:-0.1px;color:#555">2D</div>
<div class="t " style="left:712.3px;top:7.1px;font-size:6.8px;letter-spacing:-0.1px;color:#555">3D</div>
<svg class="abs" style="left:734.00px;top:7.10px" width="8.00" height="8.00" viewBox="0 0 8 8"><g stroke="#666" fill="none" stroke-width="0.8"><circle cx="4" cy="4" r="3.3"/><path d="M4 1.8L6 2.9V5.1L4 6.2L2 5.1V2.9ZM2 2.9L4 4L6 2.9M4 4V6.2" stroke-width="0.6"/></g></svg>
<svg class="abs" style="left:755.10px;top:7.80px" width="9.00" height="7.00" viewBox="0 0 9 7"><path d="M0.6 3.5Q4.5 -1.4 8.4 3.5Q4.5 8.4 0.6 3.5Z" fill="none" stroke="#666" stroke-width="0.9"/><circle cx="4.5" cy="3.5" r="1.5" fill="#666"/></svg>
<svg class="abs" style="left:777.80px;top:6.90px" width="8.00" height="8.00" viewBox="0 0 8 8"><circle cx="4" cy="4" r="3.4" fill="#777"/><rect x="3.55" y="1.9" width="0.9" height="2.8" fill="#fff"/><rect x="3.55" y="5.3" width="0.9" height="0.9" fill="#fff"/></svg>
</div>
<div id="edge"></div>
</div></div>
</body></html>
